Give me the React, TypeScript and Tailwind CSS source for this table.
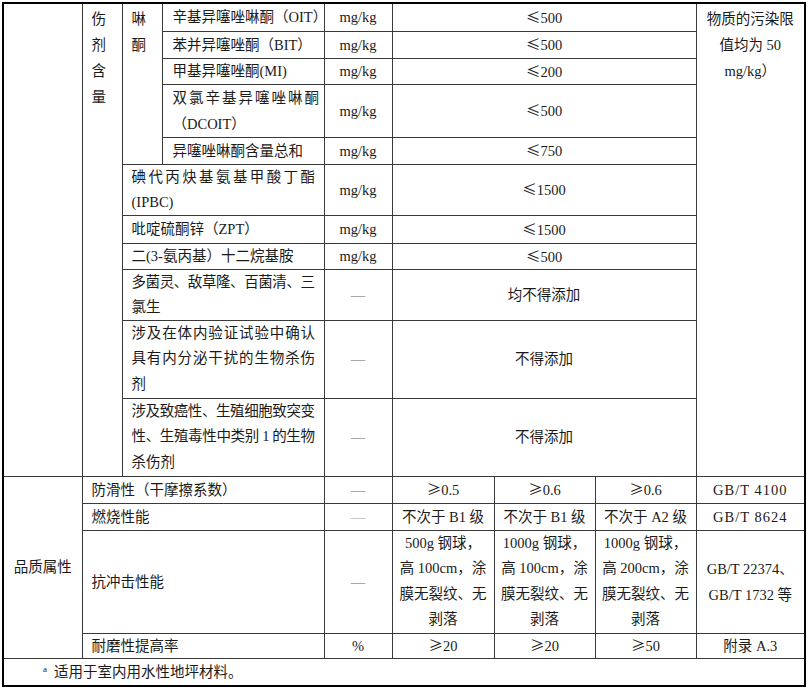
import type { ReactNode } from "react";

const bd = "border border-[#3a3a3a]";
const dash = "border border-[#3a3a3a] text-center text-[#666]";

const lineH = {
  26: "h-[26px] leading-[26px]",
  25: "h-[25px] leading-[25px]",
  25.5: "h-[25.5px] leading-[25.5px]",
  25.67: "h-[25.67px] leading-[25.67px]",
};

type H = keyof typeof lineH;

// one line of a multi-line cell, stretched edge to edge
function J({ children, h = 26 }: { children: ReactNode; h?: H }) {
  return (
    <span className={`block ${lineH[h]} text-justify tracking-[-0.5px] [text-align-last:justify]`}>
      {children}
    </span>
  );
}

function L({ children, h = 26 }: { children: ReactNode; h?: H }) {
  return <span className={`block ${lineH[h]}`}>{children}</span>;
}

// ≤ / ≥ set full width like the source document
function Op({ c }: { c: string }) {
  return <span className="font-['Noto_Sans_CJK_SC',sans-serif]">{c}</span>;
}

export default function App() {
  return (
    <div className="min-h-screen bg-white p-[2px]">
      <table className="w-[802px] table-fixed border-collapse border-2 border-black whitespace-nowrap font-['Liberation_Serif','Noto_Sans_CJK_SC',serif] text-[14.5px] leading-[18px] text-[#1a1a1a]">
        <colgroup>
          <col className="w-[79px]" />
          <col className="w-[40px]" />
          <col className="w-[40px]" />
          <col className="w-[162px]" />
          <col className="w-[68px]" />
          <col className="w-[102px]" />
          <col className="w-[101px]" />
          <col className="w-[101px]" />
          <col className="w-[109px]" />
        </colgroup>
        <tbody>
          <tr className="h-[28px]">
            <td rowSpan={11} className={bd}></td>
            <td rowSpan={11} className={`${bd} px-[9px] pt-[2px] align-top`}>
              <L>伤</L>
              <L>剂</L>
              <L>含</L>
              <L>量</L>
            </td>
            <td rowSpan={5} className={`${bd} px-[9px] pt-[2px] align-top`}>
              <L>啉</L>
              <L>酮</L>
            </td>
            <td className={`${bd} pl-[10px]`}>辛基异噻唑啉酮（OIT）</td>
            <td className={`${bd} text-center`}>mg/kg</td>
            <td colSpan={3} className={`${bd} text-center`}>
              <Op c="≤" />500
            </td>
            <td rowSpan={11} className={`${bd} pt-[2px] text-center align-top`}>
              <L>物质的污染限</L>
              <L>值均为 50</L>
              <L>mg/kg）</L>
            </td>
          </tr>
          <tr className="h-[27px]">
            <td className={`${bd} pl-[10px]`}>苯并异噻唑酮（BIT）</td>
            <td className={`${bd} text-center`}>mg/kg</td>
            <td colSpan={3} className={`${bd} text-center`}>
              <Op c="≤" />500
            </td>
          </tr>
          <tr className="h-[26px]">
            <td className={`${bd} pl-[10px]`}>甲基异噻唑酮(MI)</td>
            <td className={`${bd} text-center`}>mg/kg</td>
            <td colSpan={3} className={`${bd} text-center`}>
              <Op c="≤" />200
            </td>
          </tr>
          <tr className="h-[53px]">
            <td className={`${bd} pl-[10px] pr-[5px]`}>
              <J>双氯辛基异噻唑啉酮</J>
              <L>（DCOIT）</L>
            </td>
            <td className={`${bd} text-center`}>mg/kg</td>
            <td colSpan={3} className={`${bd} text-center`}>
              <Op c="≤" />500
            </td>
          </tr>
          <tr className="h-[27px]">
            <td className={`${bd} pl-[10px]`}>异噻唑啉酮含量总和</td>
            <td className={`${bd} text-center`}>mg/kg</td>
            <td colSpan={3} className={`${bd} text-center`}>
              <Op c="≤" />750
            </td>
          </tr>
          <tr className="h-[51px]">
            <td colSpan={2} className={`${bd} px-[9px]`}>
              <J h={25}>碘代丙炔基氨基甲酸丁酯</J>
              <L h={25}>(IPBC)</L>
            </td>
            <td className={`${bd} text-center`}>mg/kg</td>
            <td colSpan={3} className={`${bd} text-center`}>
              <Op c="≤" />1500
            </td>
          </tr>
          <tr className="h-[28px]">
            <td colSpan={2} className={`${bd} px-[9px]`}>吡啶硫酮锌（ZPT）</td>
            <td className={`${bd} text-center`}>mg/kg</td>
            <td colSpan={3} className={`${bd} text-center`}>
              <Op c="≤" />1500
            </td>
          </tr>
          <tr className="h-[26px]">
            <td colSpan={2} className={`${bd} px-[9px]`}>二(3-氨丙基）十二烷基胺</td>
            <td className={`${bd} text-center`}>mg/kg</td>
            <td colSpan={3} className={`${bd} text-center`}>
              <Op c="≤" />500
            </td>
          </tr>
          <tr className="h-[51px]">
            <td colSpan={2} className={`${bd} px-[9px]`}>
              <J h={25}>多菌灵、敌草隆、百菌清、三</J>
              <L h={25}>氯生</L>
            </td>
            <td className={dash}>—</td>
            <td colSpan={3} className={`${bd} text-center`}>均不得添加</td>
          </tr>
          <tr className="h-[78px]">
            <td colSpan={2} className={`${bd} px-[9px]`}>
              <J h={25.67}>涉及在体内验证试验中确认</J>
              <J h={25.67}>具有内分泌干扰的生物杀伤</J>
              <L h={25.67}>剂</L>
            </td>
            <td className={dash}>—</td>
            <td colSpan={3} className={`${bd} text-center`}>不得添加</td>
          </tr>
          <tr className="h-[78px]">
            <td colSpan={2} className={`${bd} px-[9px]`}>
              <J h={25.67}>涉及致癌性、生殖细胞致突变</J>
              <J h={25.67}>性、生殖毒性中类别 1 的生物</J>
              <L h={25.67}>杀伤剂</L>
            </td>
            <td className={dash}>—</td>
            <td colSpan={3} className={`${bd} text-center`}>不得添加</td>
          </tr>

          {/* 品质属性 */}
          <tr className="h-[27px]">
            <td rowSpan={4} className={`${bd} text-center`}>品质属性</td>
            <td colSpan={3} className={`${bd} pl-[9px]`}>防滑性（干摩擦系数）</td>
            <td className={dash}>—</td>
            <td className={`${bd} text-center`}>
              <Op c="≥" />0.5
            </td>
            <td className={`${bd} text-center`}>
              <Op c="≥" />0.6
            </td>
            <td className={`${bd} text-center`}>
              <Op c="≥" />0.6
            </td>
            <td className={`${bd} text-center tracking-[1px]`}>GB/T 4100</td>
          </tr>
          <tr className="h-[27px]">
            <td colSpan={3} className={`${bd} pl-[9px]`}>燃烧性能</td>
            <td className={`${dash} text-[#999]`}>—</td>
            <td className={`${bd} text-center`}>不次于 B1 级</td>
            <td className={`${bd} text-center`}>不次于 B1 级</td>
            <td className={`${bd} text-center`}>不次于 A2 级</td>
            <td className={`${bd} text-center tracking-[1px]`}>GB/T 8624</td>
          </tr>
          <tr className="h-[103px]">
            <td colSpan={3} className={`${bd} pl-[9px]`}>抗冲击性能</td>
            <td className={dash}>—</td>
            <td className={`${bd} text-center`}>
              <L h={25.5}>500g 钢球，</L>
              <L h={25.5}>高 100cm，涂</L>
              <L h={25.5}>膜无裂纹、无</L>
              <L h={25.5}>剥落</L>
            </td>
            <td className={`${bd} text-center`}>
              <L h={25.5}>1000g 钢球，</L>
              <L h={25.5}>高 100cm，涂</L>
              <L h={25.5}>膜无裂纹、无</L>
              <L h={25.5}>剥落</L>
            </td>
            <td className={`${bd} text-center`}>
              <L h={25.5}>1000g 钢球，</L>
              <L h={25.5}>高 200cm，涂</L>
              <L h={25.5}>膜无裂纹、无</L>
              <L h={25.5}>剥落</L>
            </td>
            <td className={`${bd} text-center`}>
              <L>GB/T 22374、</L>
              <L>GB/T 1732 等</L>
            </td>
          </tr>
          <tr className="h-[25px]">
            <td colSpan={3} className={`${bd} pl-[9px]`}>耐磨性提高率</td>
            <td className={`${bd} text-center`}>%</td>
            <td className={`${bd} text-center`}>
              <Op c="≥" />20
            </td>
            <td className={`${bd} text-center`}>
              <Op c="≥" />20
            </td>
            <td className={`${bd} text-center`}>
              <Op c="≥" />50
            </td>
            <td className={`${bd} text-center`}>附录 A.3</td>
          </tr>
          <tr className="h-[28px]">
            <td colSpan={9} className={`${bd} pl-[39px]`}>
              <sup className="mr-[7px] text-[9px]">a</sup>适用于室内用水性地坪材料。
            </td>
          </tr>
        </tbody>
      </table>
    </div>
  );
}
